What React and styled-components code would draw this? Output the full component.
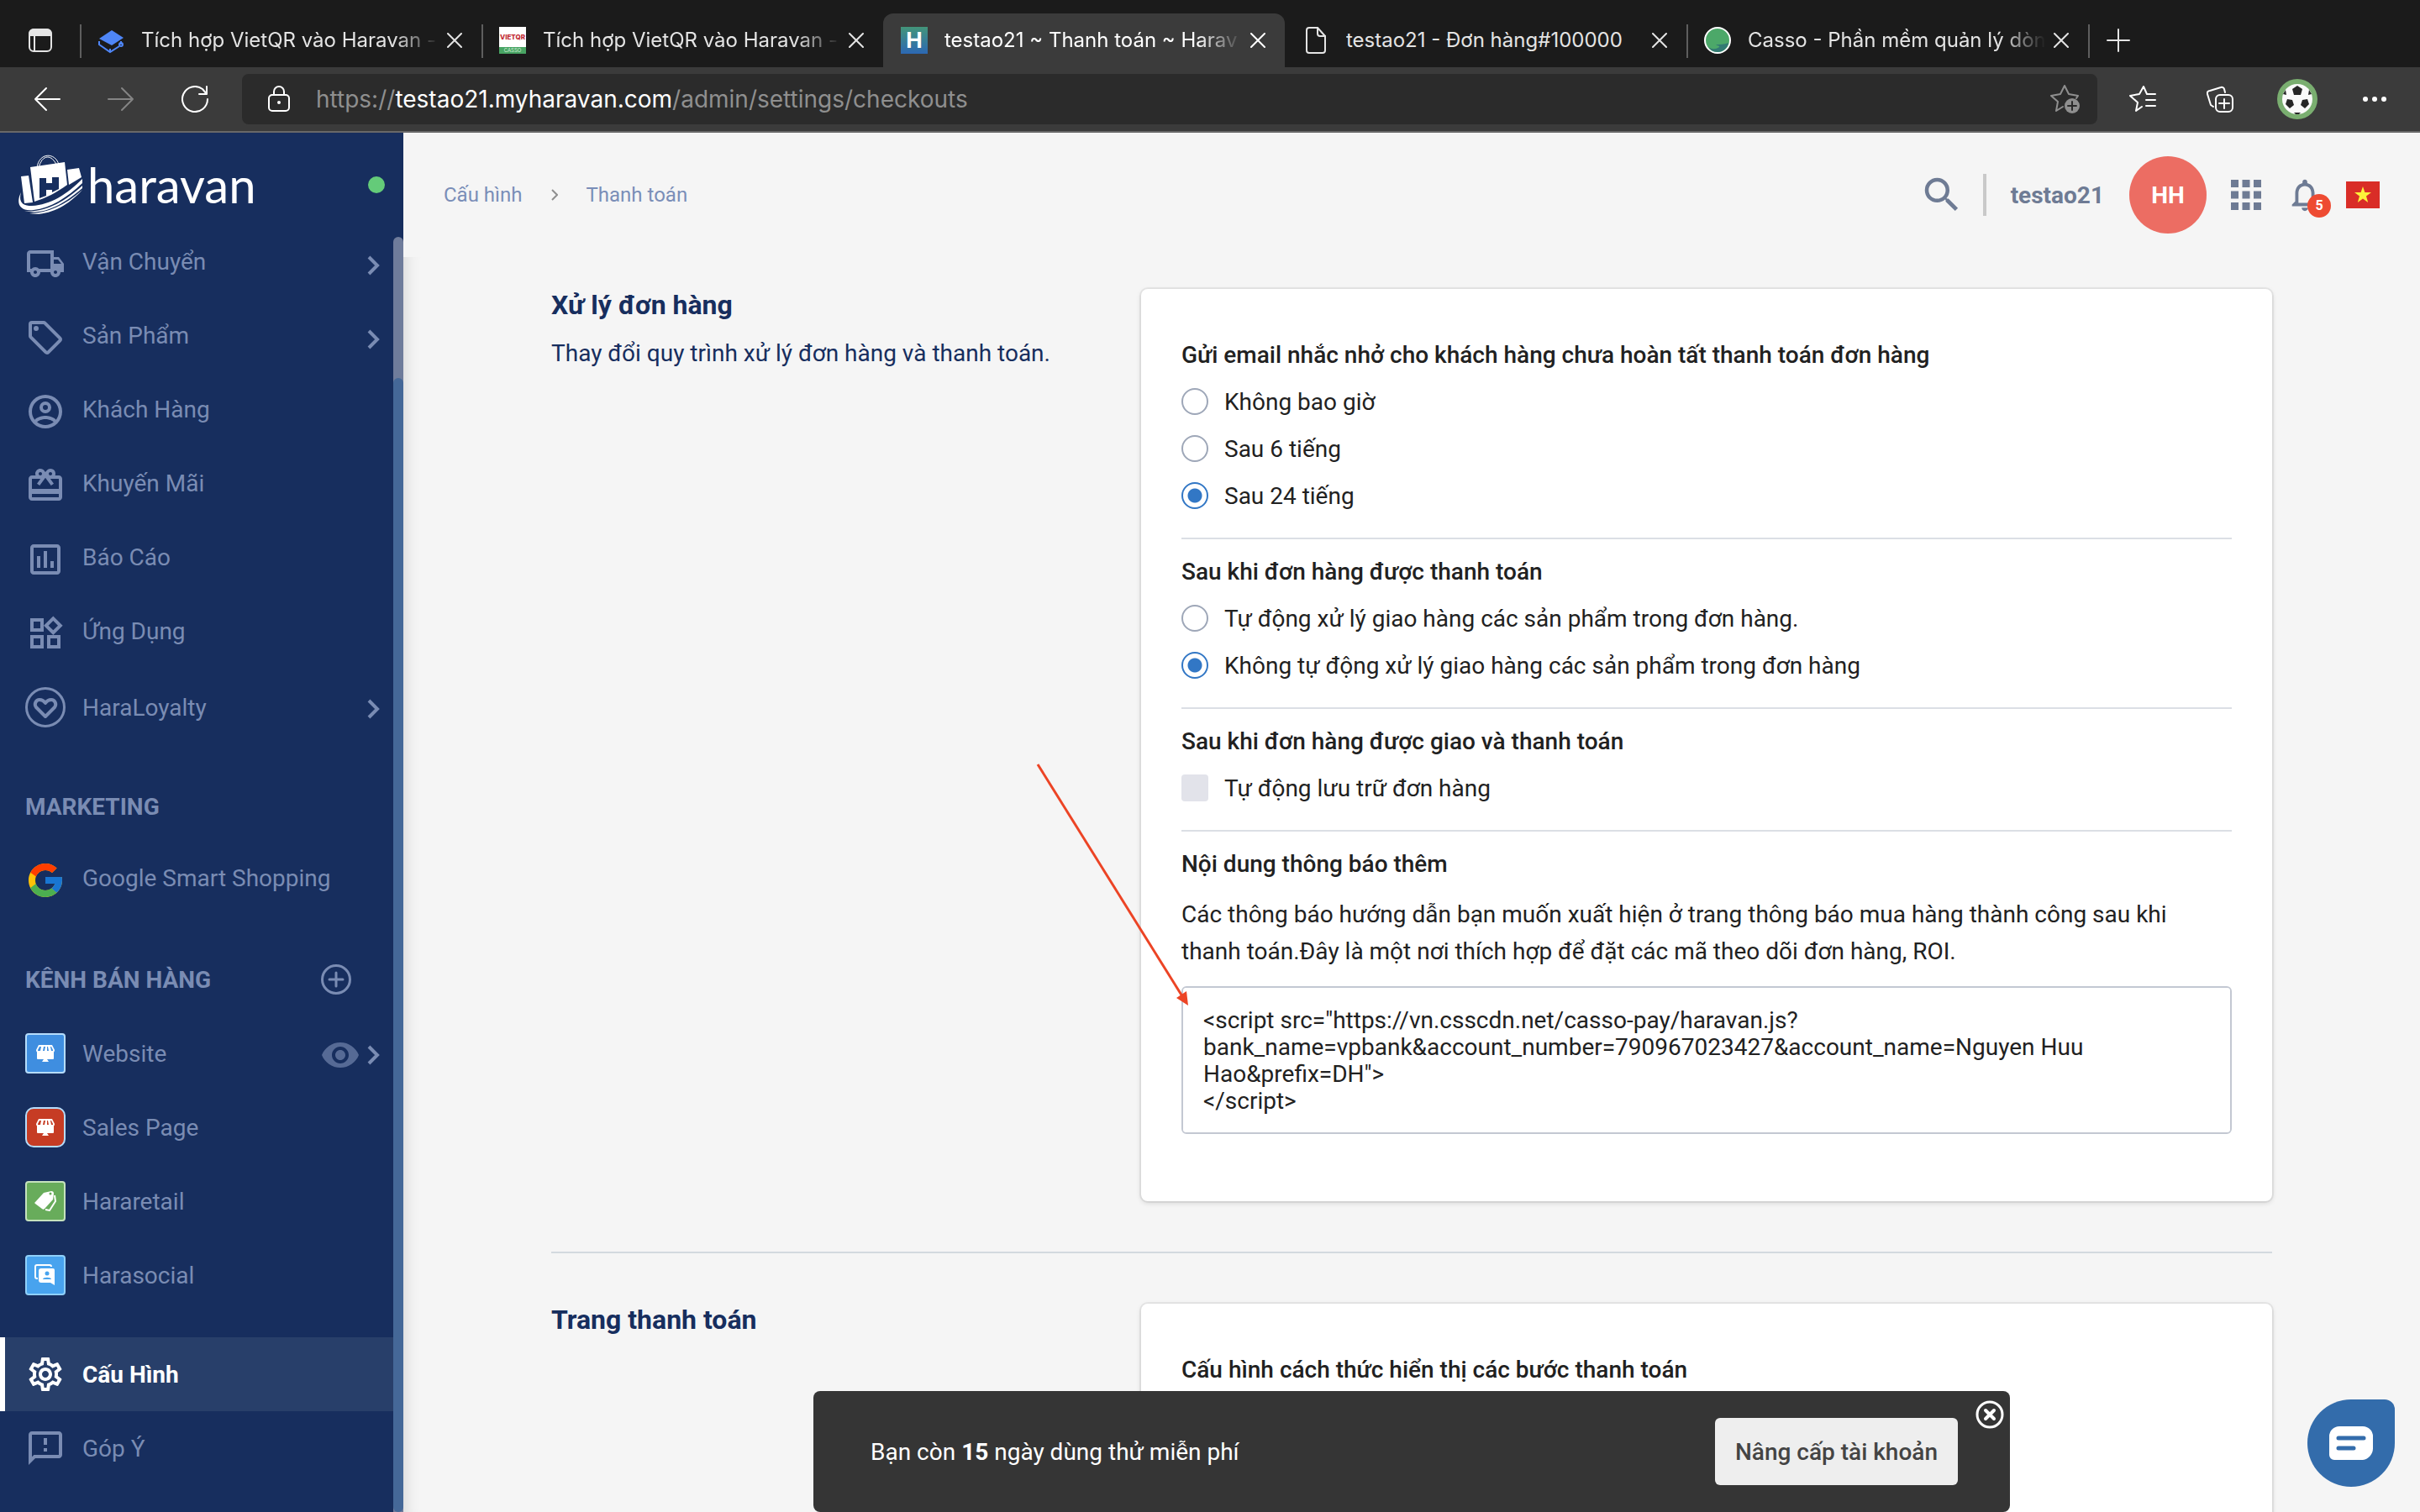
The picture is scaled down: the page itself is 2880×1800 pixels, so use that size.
import React, { useState } from "react";
import styled, { createGlobalStyle, css } from "styled-components";
import {
  MdApps,
  MdCardGiftcard,
  MdNotificationsNone,
  MdOutlineAssessment,
  MdOutlineFeedback,
  MdOutlineLocalShipping,
  MdOutlineSettings,
  MdOutlineWidgets,
  MdSearch,
  MdVisibility,
} from "react-icons/md";
import { FcGoogle } from "react-icons/fc";

const GlobalStyle = createGlobalStyle`
  * {
    box-sizing: border-box;
  }
  body {
    margin: 0;
    overflow: hidden;
    background: #f5f5f5;
    font-family: Roboto, "Noto Sans", sans-serif;
    font-size: 28px;
    color: #212121;
  }
  button {
    border: 0;
    padding: 0;
    background: none;
    font: inherit;
    color: inherit;
    cursor: pointer;
  }
  a {
    color: inherit;
    text-decoration: none;
  }
  svg {
    display: block;
    flex-shrink: 0;
  }
`;

const Window = styled.div`
  display: flex;
  flex-direction: column;
  height: 100vh;
`;

/* ---------- browser chrome ---------- */

const TabStrip = styled.div`
  display: flex;
  align-items: flex-end;
  height: 80px;
  background: #1b1b1b;
  color: #e4e4e4;
  font-family: Inter, "Noto Sans", sans-serif;
  font-size: 24px;
`;

const TabMenuButton = styled.button`
  display: flex;
  align-items: center;
  justify-content: center;
  width: 95px;
  height: 64px;
`;

const Tab = styled.div`
  position: relative;
  display: flex;
  align-items: center;
  width: 478px;
  height: 64px;
  padding: 0 23px 0 21px;
  border-radius: 12px 12px 0 0;
  ${(props) =>
    props.$active
      ? css`
          background: #3b3b3b;
          color: #fff;
        `
      : css`
          &::before {
            content: "";
            position: absolute;
            left: 0;
            top: 13px;
            width: 2px;
            height: 40px;
            background: ${props.$afterActive ? "transparent" : "#5e5e5e"};
          }
        `}
`;

const TabTitle = styled.a`
  flex: 1;
  min-width: 0;
  margin: 0 6px 0 20px;
  overflow: hidden;
  white-space: nowrap;
  line-height: 40px;
  ${(props) =>
    props.$fade &&
    css`
      mask-image: linear-gradient(to right, #000 84%, transparent 99%);
    `}
`;

const NewTabButton = styled.button`
  position: relative;
  display: flex;
  align-items: center;
  justify-content: center;
  width: 72px;
  height: 64px;
  &::before {
    content: "";
    position: absolute;
    left: 0;
    top: 13px;
    width: 2px;
    height: 40px;
    background: #5e5e5e;
  }
`;

const Favicon = styled.span`
  display: flex;
  flex-shrink: 0;
  align-items: center;
  justify-content: center;
  width: 32px;
  height: 32px;
`;

const HaravanFavicon = styled(Favicon)`
  background: linear-gradient(#43957a, #2c68b4);
  color: #fff;
  font-weight: 700;
  font-size: 26px;
  line-height: 32px;
`;

const VietQrFavicon = styled(Favicon)`
  flex-direction: column;
  justify-content: space-between;
  background: #fff;
  color: #c22b34;
  font-size: 8px;
  font-weight: 800;
  line-height: 24px;
  span {
    width: 100%;
    background: #48a463;
    color: #d5efdc;
    font-size: 6px;
    font-weight: 400;
    line-height: 8px;
    text-align: center;
  }
`;

const Toolbar = styled.div`
  display: flex;
  align-items: center;
  height: 78px;
  border-bottom: 2px solid #686868;
  background: #3b3b3b;
  color: #fff;
`;

const ToolbarButton = styled.button`
  display: flex;
  align-items: center;
  justify-content: center;
  width: 88px;
  height: 60px;
  color: ${(props) => (props.$muted ? "#848484" : "#fff")};
`;

const NavButtons = styled.div`
  display: flex;
  width: 288px;
  padding-left: 12px;
`;

const AddressBar = styled.div`
  display: flex;
  flex: 1;
  align-items: center;
  height: 60px;
  padding: 0 20px 0 28px;
  border-radius: 8px;
  background: #2b2b2b;
`;

const UrlField = styled.div`
  flex: 1;
  margin-left: 28px;
  color: #8f8f8f;
  font-family: Inter, "Noto Sans", sans-serif;
  font-size: 28px;
  line-height: 40px;
  outline: none;
  b {
    color: #fff;
    font-weight: 400;
  }
`;

const FavoriteButton = styled.button`
  color: #8f8f8f;
`;

const ToolbarActions = styled.div`
  display: flex;
  align-items: center;
  gap: 4px;
  padding: 0 10px;
`;

/* ---------- sidebar ---------- */

const Page = styled.div`
  display: flex;
  flex: 1;
  min-height: 0;
`;

const Sidebar = styled.aside`
  position: relative;
  display: flex;
  flex-direction: column;
  width: 480px;
  flex-shrink: 0;
  background: #172e5e;
  color: #7a8cb3;
`;

const Brand = styled.div`
  display: flex;
  align-items: center;
  justify-content: space-between;
  height: 112px;
  padding: 12px 22px 0;
`;

const BrandLink = styled.a`
  display: flex;
  align-items: center;
  gap: 4px;
  height: 72px;
  color: #fff;
  font-family: Lato, sans-serif;
  font-size: 58px;
  line-height: 60px;
`;

const OnlineDot = styled.span`
  width: 20px;
  height: 20px;
  border-radius: 50%;
  background: #64cb79;
`;

const Menu = styled.nav`
  flex: 1;
  padding-right: 12px;
`;

const MenuRow = styled.div`
  display: flex;
  align-items: center;
  gap: 8px;
  height: 88px;
  padding: 0 15px 0 30px;
  ${(props) =>
    props.$active &&
    css`
      padding-left: 24px;
      border-left: 6px solid #fff;
      background: #283f6a;
      color: #fff;
      font-weight: 700;
    `}
`;

const MenuLink = styled.a`
  display: flex;
  flex: 1;
  align-items: center;
  gap: 20px;
`;

const MenuLabel = styled.span`
  line-height: 36px;
  ${(props) => (props.$raised ? "padding-bottom: 4px;" : "padding-top: 2px;")}
`;

const MenuHeading = styled.div`
  display: flex;
  align-items: center;
  justify-content: space-between;
  height: 88px;
  margin-top: 30px;
  padding: 0 50px 0 30px;
  font-weight: 700;
`;

const MenuFooter = styled.div`
  margin-top: 30px;
`;

const RowButton = styled.button`
  display: flex;
  align-items: center;
  padding-top: 4px;
`;

const AppTile = styled.span`
  display: flex;
  align-items: center;
  justify-content: center;
  width: 48px;
  height: 48px;
  border: 2px solid ${(props) => props.$edge};
  border-radius: ${(props) => (props.$round ? "10px" : "4px")};
  background: ${(props) => props.$fill};
  color: #fff;
`;

const ScrollTrack = styled.div`
  position: absolute;
  top: 124px;
  right: 0;
  bottom: 0;
  width: 12px;
  padding-top: 168px;
  border-radius: 6px 6px 0 0;
  background: #6f7c9b;
`;

const ScrollThumb = styled.div`
  height: 100%;
  border-radius: 6px;
  background: #456898;
`;

/* ---------- main column ---------- */

const Main = styled.main`
  flex: 1;
  min-width: 0;
  overflow: hidden;
`;

const TopBar = styled.header`
  display: flex;
  align-items: center;
  justify-content: space-between;
  height: 148px;
  padding: 0 48px;
`;

const Breadcrumb = styled.nav`
  display: flex;
  align-items: center;
  gap: 34px;
  color: #7a8eb8;
  font-size: 24px;
  line-height: 32px;
`;

const Account = styled.div`
  display: flex;
  align-items: center;
  color: #6e7b94;
`;

const Separator = styled.span`
  width: 4px;
  height: 50px;
  margin: 0 29px 0 22px;
  background: #c9c9c9;
`;

const ShopName = styled.a`
  font-weight: 700;
`;

const Avatar = styled.button`
  width: 92px;
  height: 92px;
  margin: 0 20px 0 30px;
  border-radius: 50%;
  background: #ec6d63;
  color: #fff;
  font-weight: 700;
`;

const Bell = styled.button`
  position: relative;
  margin: 0 26px 0 20px;
`;

const BellCount = styled.span`
  position: absolute;
  right: -8px;
  bottom: -4px;
  width: 28px;
  height: 28px;
  border-radius: 50%;
  background: #ee4b32;
  color: #fff;
  font-size: 16px;
  font-weight: 700;
  line-height: 28px;
  text-align: center;
`;

const Flag = styled.button`
  display: flex;
  align-items: center;
  justify-content: center;
  width: 40px;
  height: 32px;
  background: #d92d27;
`;

const Content = styled.div`
  height: calc(100vh - 306px);
  padding: 38px 176px 0;
  box-shadow: inset 20px 0 20px -20px rgba(0, 0, 0, 0.16);
`;

const Section = styled.section`
  display: grid;
  grid-template-columns: 702fr 1346fr;
  align-items: start;
  & + & {
    margin-top: 60px;
    padding-top: 60px;
    border-top: 2px solid #d3d9df;
  }
`;

const SectionTitle = styled.h2`
  margin: 0;
  color: #172e5e;
  font-size: 32px;
  font-weight: 700;
  line-height: 38px;
`;

const SectionHint = styled.p`
  margin: 17px 0 0;
  color: #172e5e;
  line-height: 44px;
`;

const Card = styled.div`
  min-height: 400px;
  padding: 52px 48px 80px;
  border-radius: 8px;
  background: #fff;
  box-shadow: 0 0 0 2px rgba(0, 0, 0, 0.05), 0 2px 6px rgba(0, 0, 0, 0.14);
`;

const Group = styled.fieldset`
  min-width: 0;
  margin: 0;
  padding: 0;
  border: 0;
`;

const groupTitle = css`
  display: block;
  padding: 0;
  font-weight: 500;
  line-height: 54px;
`;

const GroupTitle = styled.legend`
  ${groupTitle}
`;

const FieldTitle = styled.label`
  ${groupTitle}
`;

const Option = styled.label`
  display: flex;
  align-items: center;
  gap: 19px;
  height: 56px;
`;

const Radio = styled.input.attrs({ type: "radio" })`
  appearance: none;
  width: 32px;
  height: 32px;
  margin: 0;
  border: 2px solid #9ea7b8;
  border-radius: 50%;
  background: #fff;
  &:checked {
    border-color: #3277c5;
    background: radial-gradient(circle, #3277c5 8px, #fff 9px);
  }
`;

const Checkbox = styled.input.attrs({ type: "checkbox" })`
  appearance: none;
  width: 32px;
  height: 32px;
  margin: 0;
  border-radius: 4px;
  background: #e2e3ea;
  &:checked {
    background: #3277c5;
  }
`;

const Divider = styled.hr`
  height: 2px;
  margin: 22px 0 12px;
  border: 0;
  background: #dbdfe5;
`;

const Paragraph = styled.p`
  margin: 11px 0 19px;
  line-height: 44px;
`;

const ScriptBox = styled.textarea`
  display: block;
  width: 100%;
  height: 176px;
  padding: 23px 24px;
  border: 2px solid #c3c8d2;
  border-radius: 6px;
  background: #fff;
  color: #212121;
  font: inherit;
  line-height: 32px;
  resize: none;
  outline: none;
`;

/* ---------- things floating over the page ---------- */

const Pointer = styled.svg`
  position: absolute;
  left: 1232px;
  top: 906px;
  pointer-events: none;
`;

const ToastHolder = styled.div`
  position: fixed;
  left: 480px;
  right: 0;
  bottom: 0;
  display: flex;
  justify-content: center;
  pointer-events: none;
`;

const Toast = styled.div`
  position: relative;
  display: flex;
  align-items: center;
  justify-content: space-between;
  width: 1424px;
  height: 144px;
  padding: 0 62px 0 68px;
  border-radius: 8px;
  background: #353535;
  color: #fff;
  pointer-events: auto;
`;

const UpgradeButton = styled.button`
  height: 80px;
  padding: 0 24px;
  border-radius: 6px;
  background: #eee;
  color: #444;
  font-weight: 500;
`;

const ToastClose = styled.button`
  position: absolute;
  top: 10px;
  right: 6px;
`;

const ChatButton = styled.button`
  position: fixed;
  right: 30px;
  bottom: 30px;
  display: flex;
  align-items: center;
  justify-content: center;
  width: 104px;
  height: 104px;
  border-radius: 52px 12px 52px 52px;
  background: #336cab;
`;

/* ---------- icons ---------- */

const Stroke = ({ size = 32, width = 2, box = 32, children }) => (
  <svg
    width={size}
    height={size}
    viewBox={`0 0 ${box} ${box}`}
    fill="none"
    stroke="currentColor"
    strokeWidth={width}
    strokeLinecap="round"
    strokeLinejoin="round"
    aria-hidden="true"
  >
    {children}
  </svg>
);

const CloseIcon = () => (
  <Stroke size={18} box={18}>
    <path d="M1 1l16 16M17 1L1 17" />
  </Stroke>
);

const SidebarIcon = () => (
  <Stroke>
    <rect x="3" y="3" width="26" height="26" rx="5" />
    <path d="M3 9a6 6 0 0 1 6-6h14a6 6 0 0 1 6 6v1H3z" fill="currentColor" />
    <path d="M9 10v19" />
  </Stroke>
);

const CourseIcon = () => (
  <svg width="32" height="32" viewBox="0 0 32 32" aria-hidden="true">
    <path d="M17 4l14 9-14 9L2 14z" fill="#4f86f7" />
    <path
      d="M2 17v4l13 9 11-7m2-2v-4M15 30v-4"
      fill="none"
      stroke="#4f86f7"
      strokeWidth="2"
    />
    <circle cx="28" cy="21" r="2" fill="none" stroke="#4f86f7" strokeWidth="2" />
  </svg>
);

const FileIcon = () => (
  <Stroke>
    <path d="M8 1h10l9 10v17a3 3 0 0 1-3 3H8a3 3 0 0 1-3-3V4a3 3 0 0 1 3-3z" />
    <path d="M18 1v7a3 3 0 0 0 3 3h6" />
  </Stroke>
);

const CassoIcon = () => (
  <svg width="32" height="32" viewBox="0 0 32 32" aria-hidden="true">
    <circle cx="16" cy="16" r="15" fill="#4ca869" stroke="#fff" strokeWidth="2" />
    <path
      d="M5 24c4 3 9 3 13 0 1-2-2-1-4-3 5 0 9 0 15-2-1 6-6 11-13 11-5 0-9-3-11-6z"
      fill="#327a73"
    />
  </svg>
);

const BackIcon = () => (
  <Stroke>
    <path d="M31 16H2M15 3L2 16l13 13" />
  </Stroke>
);

const ForwardIcon = () => (
  <Stroke>
    <path d="M1 16h29M17 3l13 13-13 13" />
  </Stroke>
);

const ReloadIcon = () => (
  <Stroke>
    <path d="M31 16A15 15 0 1 1 25 4l5 6M30 1v9h-9" />
  </Stroke>
);

const LockIcon = () => (
  <Stroke>
    <rect x="4" y="11" width="24" height="19" rx="4" />
    <path d="M10 11V7a6 6 0 0 1 12 0v4" />
    <circle cx="16" cy="20" r="1" fill="currentColor" />
  </Stroke>
);

const AddFavoriteIcon = () => (
  <Stroke size={36} box={36}>
    <path d="M15 27l-8 5 2-11-8-7 11-2 5-10 5 10 11 2-2 3" />
    <circle cx="26" cy="26" r="9" fill="currentColor" stroke="none" />
    <path d="M26 21v10M21 26h10" stroke="#2b2b2b" />
  </Stroke>
);

const FavoritesIcon = () => (
  <Stroke>
    <path d="M15 25l-7 5 2-10-9-8 11-2 5-9 4 9h10M20 17h11M20 24h11" />
  </Stroke>
);

const CollectionsIcon = () => (
  <Stroke>
    <rect x="11" y="11" width="20" height="20" rx="5" />
    <path d="M21 16v11M15 21h12M22 8l-1-4a3 3 0 0 0-4-2L4 6a3 3 0 0 0-3 4l4 13 3 2" />
  </Stroke>
);

const BallIcon = () => (
  <svg width="48" height="48" viewBox="0 0 48 48" aria-hidden="true">
    <circle cx="24" cy="24" r="24" fill="#7aae70" />
    <circle cx="24" cy="24" r="18" fill="#fafafa" />
    <g fill="#262626">
      <path d="M24 8l6 4-2 7h-8l-2-7z" />
      <path d="M12 24l6 1 2 6-5 4-5-5zM36 24l-6 1-2 6 5 4 5-5z" />
      <path d="M7 18l3-5 1 6zM41 18l-3-5-1 6zM20 40h8l-2 2h-4z" />
    </g>
  </svg>
);

const MoreIcon = () => (
  <svg width="32" height="8" viewBox="0 0 32 8" fill="currentColor" aria-hidden="true">
    <circle cx="5" cy="4" r="3" />
    <circle cx="16" cy="4" r="3" />
    <circle cx="27" cy="4" r="3" />
  </svg>
);

const BagLogo = () => (
  <svg width="78" height="72" viewBox="0 0 78 72" fill="#fff" aria-hidden="true">
    <path d="M3 26l9-1 5 32-10 1z" />
    <path d="M14 15l41-6 3 27C46 45 32 52 19 56z" />
    <path d="M58 18l14-2 3 11-15 9z" />
    <path
      d="M22 16C24-3 44-3 48 12M24 16C28-1 40-1 46 14"
      fill="none"
      stroke="#fff"
      strokeWidth="1"
    />
    <path d="M25 28h8v6h7v-7h8v14l-8 4v-3h-7v7l-8 3z" fill="#172e5e" />
    <path d="M3 45C0 56 4 61 16 61c22-1 42-14 60-32v5C58 51 38 64 18 66 0 68-3 57 3 45z" />
    <path d="M7 67c24 3 48-11 69-30v3C54 59 30 73 7 67z" />
    <path d="M13 70c20 0 44-10 63-28-18 20-42 32-63 28z" />
  </svg>
);

const TagIcon = () => (
  <svg width="48" height="48" viewBox="0 0 24 24" fill="currentColor" aria-hidden="true">
    <path d="M21.41 11.58l-9-9A2 2 0 0 0 11 2H4a2 2 0 0 0-2 2v7a2 2 0 0 0 .59 1.42l9 9A2 2 0 0 0 13 22a2 2 0 0 0 1.41-.59l7-7A2 2 0 0 0 22 13a2 2 0 0 0-.59-1.42M13 20l-9-9V4h7l9 9zM6.5 5A1.5 1.5 0 1 1 5 6.5 1.5 1.5 0 0 1 6.5 5" />
  </svg>
);

const CustomerIcon = () => (
  <svg width="48" height="48" viewBox="0 0 24 24" fill="currentColor" aria-hidden="true">
    <path d="M12 2A10 10 0 0 0 2 12a10 10 0 0 0 10 10 10 10 0 0 0 10-10A10 10 0 0 0 12 2M7.07 18.28C7.5 17.38 10.12 16.5 12 16.5s4.5.88 4.93 1.78A7.9 7.9 0 0 1 12 20c-1.86 0-3.57-.64-4.93-1.72m11.29-1.45c-1.43-1.74-4.9-2.33-6.36-2.33s-4.93.59-6.36 2.33A7.93 7.93 0 0 1 4 12c0-4.41 3.59-8 8-8s8 3.59 8 8c0 1.82-.62 3.5-1.64 4.83M12 6a3.5 3.5 0 0 0-3.5 3.5A3.5 3.5 0 0 0 12 13a3.5 3.5 0 0 0 3.5-3.5A3.5 3.5 0 0 0 12 6m0 5a1.5 1.5 0 0 1-1.5-1.5A1.5 1.5 0 0 1 12 8a1.5 1.5 0 0 1 1.5 1.5A1.5 1.5 0 0 1 12 11" />
  </svg>
);

const LoyaltyIcon = () => (
  <Stroke size={48} box={48} width={3}>
    <circle cx="24" cy="24" r="22.5" />
    <path
      d="M24 35L13 24c-3-4 0-9 4-9 3 0 5 1 7 4 2-3 4-4 7-4 4 0 7 5 4 9z"
      strokeWidth="4"
    />
  </Stroke>
);

const PlusCircleIcon = () => (
  <Stroke size={36} box={36} width={3}>
    <circle cx="18" cy="18" r="16.5" />
    <path d="M18 10v16M10 18h16" />
  </Stroke>
);

const ChevronIcon = () => (
  <svg
    width="16"
    height="24"
    viewBox="0 0 16 24"
    fill="none"
    stroke="currentColor"
    strokeWidth="4"
    aria-hidden="true"
  >
    <path d="M2 2l10 10L2 22" />
  </svg>
);

const CrumbIcon = () => (
  <svg width="8" height="14" viewBox="0 0 8 14" fill="none" stroke="#8f8f8f" strokeWidth="2" aria-hidden="true">
    <path d="M1 1l6 6-6 6" />
  </svg>
);

const StoreIcon = ({ gap }) => (
  <svg width="24" height="24" viewBox="0 0 24 24" aria-hidden="true">
    <path d="M4 2h16l3 6c0 2-1 3-3 3H4c-2 0-3-1-3-3z" fill="#fff" />
    <path
      d="M5 4L3 8v1h3l1-5zM10 4L9 9h2l1-5zM14 4v5h2l-1-5zM18 4l1 5h2V8l-2-4z"
      fill={gap}
    />
    <path d="M2 10h20v8a1 1 0 0 1-1 1h-7l2 3H8l2-3H3a1 1 0 0 1-1-1z" fill="#fff" />
  </svg>
);

const RetailIcon = () => (
  <svg width="26" height="26" viewBox="0 0 26 26" aria-hidden="true">
    <path d="M1 14L11 3l9-2c2 0 3 1 3 3l-1 7-10 11c-1 1-2 1-3 0l-8-6c-1-1-1-1 0-2z" fill="#fff" />
    <path d="M24 6l1 7-7 11-5-1" fill="none" stroke="#fff" strokeWidth="2" />
    <circle cx="19" cy="4" r="1.5" fill="#68ac5b" />
  </svg>
);

const SocialIcon = () => (
  <svg width="26" height="26" viewBox="0 0 26 26" aria-hidden="true">
    <path d="M4 17H3a2 2 0 0 1-2-2V3a2 2 0 0 1 2-2h15a2 2 0 0 1 2 2" fill="none" stroke="#fff" strokeWidth="2" />
    <path d="M8 5h14a2 2 0 0 1 2 2v18l-5-3H8a3 3 0 0 1-3-3V8a3 3 0 0 1 3-3z" fill="#fff" />
    <circle cx="15" cy="11" r="2.5" fill="#48a3ee" />
    <path d="M10 18c0-3 10-3 10 0z" fill="#48a3ee" />
  </svg>
);

/* ---------- data ---------- */

const tabs = [
  { title: "Tích hợp VietQR vào Haravan -", icon: <Favicon><CourseIcon /></Favicon>, fade: true },
  {
    title: "Tích hợp VietQR vào Haravan -",
    icon: (
      <VietQrFavicon>
        VIETQR
        <span>CASSO</span>
      </VietQrFavicon>
    ),
    fade: true,
  },
  {
    title: "testao21 ~ Thanh toán ~ Harav",
    icon: <HaravanFavicon>H</HaravanFavicon>,
    active: true,
    fade: true,
  },
  { title: "testao21 - Đơn hàng#100000", icon: <Favicon><FileIcon /></Favicon>, afterActive: true },
  { title: "Casso - Phần mềm quản lý dòn", icon: <Favicon><CassoIcon /></Favicon>, fade: true },
];

const menu = [
  { label: "Vận Chuyển", icon: <MdOutlineLocalShipping size={48} />, raised: true, expand: true },
  { label: "Sản Phẩm", icon: <TagIcon />, raised: true, expand: true },
  { label: "Khách Hàng", icon: <CustomerIcon />, raised: true },
  { label: "Khuyến Mãi", icon: <MdCardGiftcard size={48} />, raised: true },
  { label: "Báo Cáo", icon: <MdOutlineAssessment size={48} />, raised: true },
  { label: "Ứng Dụng", icon: <MdOutlineWidgets size={48} />, raised: true },
  { label: "HaraLoyalty", icon: <LoyaltyIcon />, expand: true },
];

const channels = [
  {
    label: "Website",
    icon: <AppTile $fill="#3f8ee0" $edge="#b5dcfb"><StoreIcon gap="#3f8ee0" /></AppTile>,
    preview: true,
    expand: true,
  },
  {
    label: "Sales Page",
    icon: <AppTile $fill="#c63c24" $edge="#b5dcfb" $round><StoreIcon gap="#c63c24" /></AppTile>,
  },
  { label: "Hararetail", icon: <AppTile $fill="#68ac5b" $edge="#c5e2bd"><RetailIcon /></AppTile> },
  { label: "Harasocial", icon: <AppTile $fill="#48a3ee" $edge="#8fd0fa"><SocialIcon /></AppTile> },
];

const reminders = ["Không bao giờ", "Sau 6 tiếng", "Sau 24 tiếng"];

const fulfilments = [
  "Tự động xử lý giao hàng các sản phẩm trong đơn hàng.",
  "Không tự động xử lý giao hàng các sản phẩm trong đơn hàng",
];

const script = `<script src="https://vn.csscdn.net/casso-pay/haravan.js?bank_name=vpbank&account_number=790967023427&account_name=Nguyen Huu Hao&prefix=DH">
</script>`;

/* ---------- components ---------- */

const MenuItem = ({ label, icon, raised, expand, preview, active }) => (
  <MenuRow $active={active}>
    <MenuLink href="#">
      {icon}
      <MenuLabel $raised={raised}>{label}</MenuLabel>
    </MenuLink>
    {preview && (
      <RowButton aria-label={`Xem ${label}`}>
        <MdVisibility size={48} color="#566a95" />
      </RowButton>
    )}
    {expand && (
      <RowButton aria-label={`Mở ${label}`}>
        <ChevronIcon />
      </RowButton>
    )}
  </MenuRow>
);

const RadioGroup = ({ title, name, options, initial }) => {
  const [value, setValue] = useState(initial);
  return (
    <Group>
      <GroupTitle>{title}</GroupTitle>
      {options.map((option) => (
        <Option key={option}>
          <Radio name={name} checked={value === option} onChange={() => setValue(option)} />
          {option}
        </Option>
      ))}
    </Group>
  );
};

const Browser = () => (
  <>
    <TabStrip>
      <TabMenuButton aria-label="Tabs">
        <SidebarIcon />
      </TabMenuButton>
      {tabs.map((tab, index) => (
        <Tab key={index} $active={tab.active} $afterActive={tab.afterActive}>
          {tab.icon}
          <TabTitle href="#" $fade={tab.fade}>
            {tab.title}
          </TabTitle>
          <button aria-label="Close tab">
            <CloseIcon />
          </button>
        </Tab>
      ))}
      <NewTabButton aria-label="New tab">
        <Stroke size={28} box={28}>
          <path d="M14 1v26M1 14h26" />
        </Stroke>
      </NewTabButton>
    </TabStrip>
    <Toolbar>
      <NavButtons>
        <ToolbarButton aria-label="Back">
          <BackIcon />
        </ToolbarButton>
        <ToolbarButton aria-label="Forward" $muted>
          <ForwardIcon />
        </ToolbarButton>
        <ToolbarButton aria-label="Reload">
          <ReloadIcon />
        </ToolbarButton>
      </NavButtons>
      <AddressBar>
        <LockIcon />
        <UrlField role="textbox" aria-label="Address" contentEditable suppressContentEditableWarning>
          https://<b>testao21.myharavan.com</b>/admin/settings/checkouts
        </UrlField>
        <FavoriteButton aria-label="Add to favorites">
          <AddFavoriteIcon />
        </FavoriteButton>
      </AddressBar>
      <ToolbarActions>
        <ToolbarButton aria-label="Favorites">
          <FavoritesIcon />
        </ToolbarButton>
        <ToolbarButton aria-label="Collections">
          <CollectionsIcon />
        </ToolbarButton>
        <ToolbarButton aria-label="Profile">
          <BallIcon />
        </ToolbarButton>
        <ToolbarButton aria-label="More">
          <MoreIcon />
        </ToolbarButton>
      </ToolbarActions>
    </Toolbar>
  </>
);

const SideMenu = () => (
  <Sidebar>
    <Brand>
      <BrandLink href="#">
        <BagLogo />
        haravan
      </BrandLink>
      <OnlineDot />
    </Brand>
    <Menu>
      {menu.map((item) => (
        <MenuItem key={item.label} {...item} />
      ))}
      <MenuHeading>MARKETING</MenuHeading>
      <MenuItem label="Google Smart Shopping" icon={<FcGoogle size={48} />} raised />
      <MenuHeading>
        KÊNH BÁN HÀNG
        <button aria-label="Thêm kênh">
          <PlusCircleIcon />
        </button>
      </MenuHeading>
      {channels.map((item) => (
        <MenuItem key={item.label} {...item} />
      ))}
      <MenuFooter>
        <MenuItem label="Cấu Hình" icon={<MdOutlineSettings size={48} />} active />
        <MenuItem label="Góp Ý" icon={<MdOutlineFeedback size={48} />} />
      </MenuFooter>
    </Menu>
    <ScrollTrack>
      <ScrollThumb />
    </ScrollTrack>
  </Sidebar>
);

const Header = () => (
  <TopBar>
    <Breadcrumb>
      <a href="#">Cấu hình</a>
      <CrumbIcon />
      <a href="#">Thanh toán</a>
    </Breadcrumb>
    <Account>
      <button aria-label="Tìm kiếm">
        <MdSearch size={54} />
      </button>
      <Separator />
      <ShopName href="#">testao21</ShopName>
      <Avatar>HH</Avatar>
      <button aria-label="Ứng dụng">
        <MdApps size={54} />
      </button>
      <Bell aria-label="Thông báo">
        <MdNotificationsNone size={46} />
        <BellCount>5</BellCount>
      </Bell>
      <Flag aria-label="Tiếng Việt">
        <svg width="20" height="20" viewBox="0 0 20 20" fill="#fdf23a" aria-hidden="true">
          <path d="M10 0l2.4 7H20l-6 4.4 2.2 7.6L10 14.6 3.8 19 6 11.4 0 7h7.6z" />
        </svg>
      </Flag>
    </Account>
  </TopBar>
);

const App = () => {
  const [archive, setArchive] = useState(false);
  return (
    <Window>
      <GlobalStyle />
      <Browser />
      <Page>
        <SideMenu />
        <Main>
          <Header />
          <Content>
            <Section>
              <div>
                <SectionTitle>Xử lý đơn hàng</SectionTitle>
                <SectionHint>Thay đổi quy trình xử lý đơn hàng và thanh toán.</SectionHint>
              </div>
              <Card>
                <RadioGroup
                  title="Gửi email nhắc nhở cho khách hàng chưa hoàn tất thanh toán đơn hàng"
                  name="reminder"
                  options={reminders}
                  initial={reminders[2]}
                />
                <Divider />
                <RadioGroup
                  title="Sau khi đơn hàng được thanh toán"
                  name="fulfilment"
                  options={fulfilments}
                  initial={fulfilments[1]}
                />
                <Divider />
                <Group>
                  <GroupTitle>Sau khi đơn hàng được giao và thanh toán</GroupTitle>
                  <Option>
                    <Checkbox checked={archive} onChange={() => setArchive(!archive)} />
                    Tự động lưu trữ đơn hàng
                  </Option>
                </Group>
                <Divider />
                <FieldTitle htmlFor="extra-script">Nội dung thông báo thêm</FieldTitle>
                <Paragraph>
                  Các thông báo hướng dẫn bạn muốn xuất hiện ở trang thông báo mua hàng thành công
                  sau khi thanh toán.Đây là một nơi thích hợp để đặt các mã theo dõi đơn hàng, ROI.
                </Paragraph>
                <ScriptBox id="extra-script" spellCheck={false} defaultValue={script} />
              </Card>
            </Section>
            <Section>
              <SectionTitle>Trang thanh toán</SectionTitle>
              <Card>
                <Group>
                  <GroupTitle>Cấu hình cách thức hiển thị các bước thanh toán</GroupTitle>
                </Group>
              </Card>
            </Section>
          </Content>
        </Main>
      </Page>
      <Pointer width="190" height="300" viewBox="0 0 190 300" aria-hidden="true">
        <path d="M3 4l172 276" stroke="#ec4425" strokeWidth="3" />
        <path d="M182 291l-14-9 12-8z" fill="#ec4425" />
      </Pointer>
      <ToastHolder>
        <Toast role="status">
          <span>
            Bạn còn <b>15</b> ngày dùng thử miễn phí
          </span>
          <UpgradeButton>Nâng cấp tài khoản</UpgradeButton>
          <ToastClose aria-label="Đóng">
            <Stroke size={36} box={36} width={3}>
              <circle cx="18" cy="18" r="15" />
              <path d="M13 13l10 10M23 13L13 23" strokeWidth="4" />
            </Stroke>
          </ToastClose>
        </Toast>
      </ToastHolder>
      <ChatButton aria-label="Chat">
        <svg width="52" height="40" viewBox="0 0 52 40" aria-hidden="true">
          <path d="M12 0h28a12 12 0 0 1 12 12v14a14 14 0 0 1-12 14H6a6 6 0 0 1-6-6V12A12 12 0 0 1 12 0z" fill="#fff" />
          <path d="M11 14h30M11 26h18" stroke="#336cab" strokeWidth="5" strokeLinecap="round" />
        </svg>
      </ChatButton>
    </Window>
  );
};

export default App;
